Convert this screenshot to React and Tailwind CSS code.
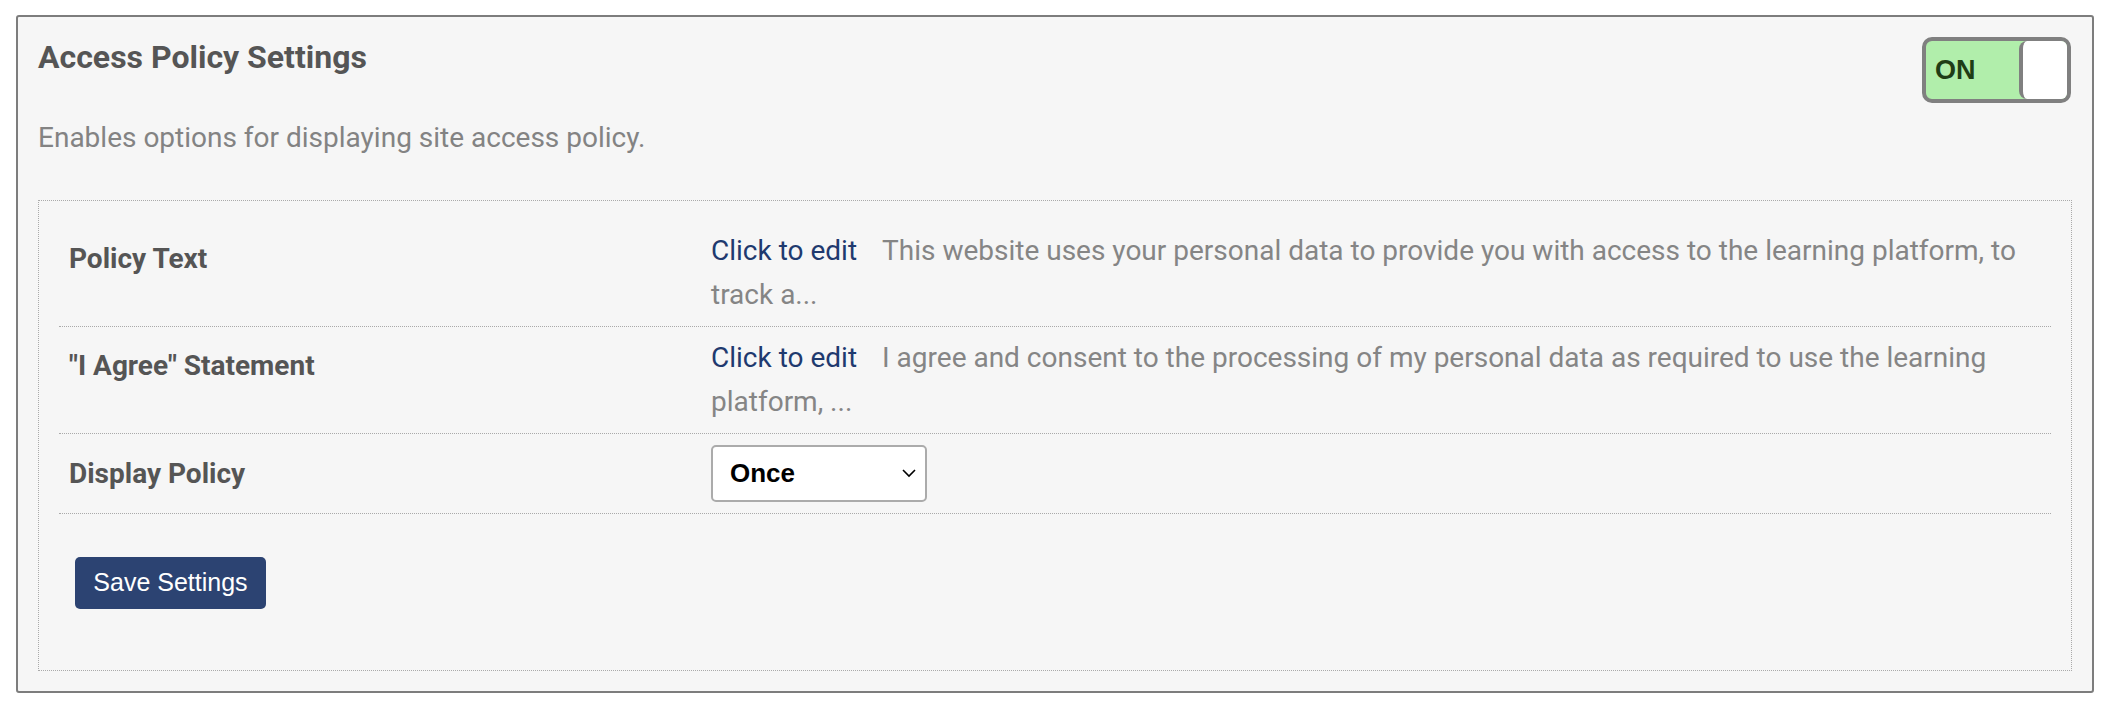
import React from "react";

const rows = [
  {
    label: "Policy Text",
    text: "This website uses your personal data to provide you with access to the learning platform, to track a...",
  },
  {
    label: '"I Agree" Statement',
    text: "I agree and consent to the processing of my personal data as required to use the learning platform, ...",
  },
];

const AccessPolicySettings = () => {
  return (
    <div className="min-h-screen bg-white pl-4 pr-[25px] pt-[15px] font-['Roboto',sans-serif]">
      <div className="border-2 border-[#7d7d7d] rounded-[3px] bg-[#f6f6f6] px-5 pt-5 pb-5">
        <div className="flex justify-between items-start">
          <h1 className="text-[32px] leading-[40px] font-bold text-[#555]">Access Policy Settings</h1>
          <div className="flex w-[149px] h-[66px] mr-[1px] border-4 border-[#808080] rounded-[10px] bg-[#b1eeab] overflow-hidden">
            <span className="flex-1 flex items-center pl-[9px] text-[27px] font-bold text-[#1f3d16] font-['Liberation_Sans',sans-serif]">
              ON
            </span>
            <span className="w-[48px] bg-white border-l-4 border-[#808080] rounded-l-[8px]"></span>
          </div>
        </div>

        <p className="mt-[15px] text-[28px] leading-[40px] text-[#838383]">
          Enables options for displaying site access policy.
        </p>

        <div className="mt-[42px] border border-dotted border-[#aaa] px-5 pt-[19px] pb-[61px]">
          {rows.map((row) => (
            <div key={row.label} className="flex border-b border-dotted border-[#aaa] py-[9px]">
              <div className="w-[652px] pl-[10px] pt-[8px] text-[28px] leading-[44px] font-bold text-[#555]">
                {row.label}
              </div>
              <p className="flex-1 pr-[12px] text-[28px] leading-[44px] text-[#858585]">
                <a className="text-[#1f3a6f] mr-[25px] cursor-pointer">Click to edit</a>
                {row.text}
              </p>
            </div>
          ))}

          <div className="flex items-center border-b border-dotted border-[#aaa] py-[11px]">
            <div className="w-[652px] pl-[10px] text-[28px] leading-[44px] font-bold text-[#555]">Display Policy</div>
            <div className="relative w-[216px] h-[57px]">
              <select className="appearance-none w-full h-full bg-white border-2 border-[#ababab] rounded-[5px] pl-[17px] text-[26px] font-bold text-black font-['Liberation_Sans',sans-serif] outline-none">
                <option>Once</option>
                <option>Always</option>
              </select>
              <svg
                className="absolute right-[11px] top-[22px] w-[14px] h-[12px] pointer-events-none"
                viewBox="0 0 14 12"
                fill="none"
                stroke="#000"
                strokeWidth="1.6"
              >
                <path d="M1 3l6 6 6-6" />
              </svg>
            </div>
          </div>

          <button className="mt-[43px] ml-4 w-[191px] h-[52px] bg-[#2c4372] text-white rounded-[5px] text-[25px] font-['Liberation_Sans',sans-serif]">
            Save Settings
          </button>
        </div>
      </div>
    </div>
  );
};

export default AccessPolicySettings;
